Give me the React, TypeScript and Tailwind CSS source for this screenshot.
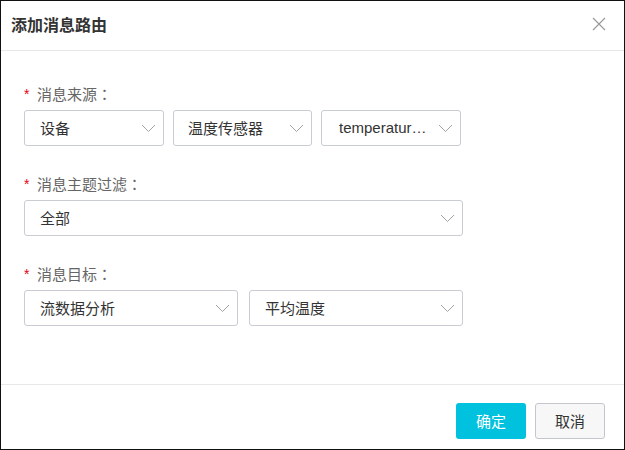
import React from "react";

const font = { fontFamily: '"Noto Sans CJK SC", "Liberation Sans", sans-serif' };
const latin = { fontFamily: '"Liberation Sans", "Noto Sans CJK SC", sans-serif' };
const tc = { fontFamily: '"Noto Sans CJK TC", sans-serif' };

const Chevron = () => (
  <svg width="15" height="9" viewBox="0 0 15 9" fill="none" className="shrink-0">
    <path d="M1 1L7.5 7.5L14 1" stroke="#a3a3a3" strokeWidth="1" />
  </svg>
);

interface SelectProps {
  value: string;
  width: string;
  padLeft?: string;
  textClass?: string;
  latinText?: boolean;
}

const Select = ({
  value,
  width,
  padLeft = "pl-[15px]",
  textClass = "",
  latinText = false,
}: SelectProps) => (
  <div
    className={`${width} h-[36px] flex items-center justify-between rounded-[3px] border border-[#c9ccd3] bg-white ${padLeft} pr-[7px]`}
  >
    <span
      className={`text-[15px] text-[#333] truncate ${textClass}`}
      style={latinText ? latin : undefined}
    >
      {value}
    </span>
    <Chevron />
  </div>
);

const Label = ({ text }: { text: string }) => (
  <div className="h-[20px] flex items-center mb-[6px] text-[15px] leading-[20px]">
    <span className="text-[#e60012] text-[14px] w-[13px]" style={latin}>
      *
    </span>
    <span className="text-[#666]">{text}</span>
    <span className="text-[#666]" style={tc}>
      ：
    </span>
  </div>
);

export default function App() {
  return (
    <div
      className="w-[625px] h-[450px] border border-[#111] bg-white flex flex-col"
      style={font}
    >
      {/* header */}
      <div className="h-[50px] shrink-0 border-b border-[#e8e8e8] flex items-center justify-between pl-[10px] pr-[18px] pb-[4px]">
        <span className="text-[16px] font-bold text-[#333]">添加消息路由</span>
        <svg width="14" height="14" viewBox="0 0 14 14">
          <path d="M1 1L13 13M13 1L1 13" stroke="#9a9a9a" strokeWidth="1.2" />
        </svg>
      </div>

      {/* body */}
      <div className="flex-1 pl-[23px] pt-[33px]">
        <Label text="消息来源" />
        <div className="flex gap-[9px]">
          <Select value="设备" width="w-[140px]" />
          <Select value="温度传感器" width="w-[139px]" padLeft="pl-[14px]" />
          <Select
            value="temperature_sensor"
            width="w-[140px]"
            padLeft="pl-[17px]"
            textClass="w-[89px]"
            latinText
          />
        </div>

        <div className="mt-[28px]">
          <Label text="消息主题过滤" />
          <Select value="全部" width="w-[439px]" />
        </div>

        <div className="mt-[28px]">
          <Label text="消息目标" />
          <div className="flex gap-[11px]">
            <Select value="流数据分析" width="w-[214px]" />
            <Select value="平均温度" width="w-[214px]" />
          </div>
        </div>
      </div>

      {/* footer */}
      <div className="shrink-0 border-t border-[#e8e8e8] pt-[18px] pb-[10px] pr-[19px] flex justify-end gap-[9px]">
        <button className="w-[70px] h-[36px] rounded-[3px] bg-[#00c1de] text-white text-[15px]">
          确定
        </button>
        <button className="w-[70px] h-[36px] rounded-[3px] bg-[#f7f7f7] border border-[#c4c6cf] text-[#333] text-[15px]">
          取消
        </button>
      </div>
    </div>
  );
}
